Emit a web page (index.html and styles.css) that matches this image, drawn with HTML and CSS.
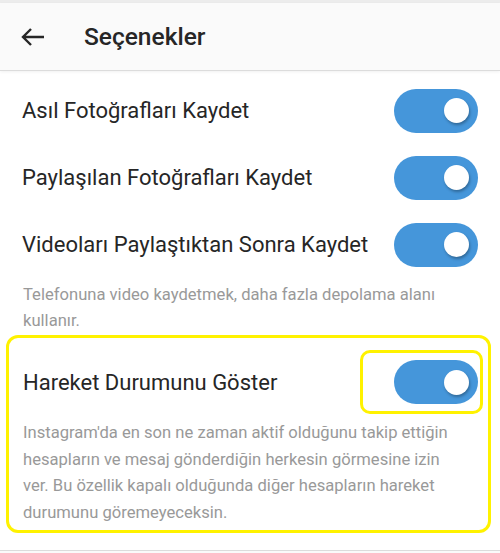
FILE: index.html
```html
<!DOCTYPE html>
<html>
<head>
  <meta charset="utf-8">
  <title>Seçenekler</title>
  <link rel="stylesheet" href="styles.css">
</head>
<body>
  <div class="status"></div>
  <div class="header">
    <svg class="back" width="24" height="20" viewBox="0 0 24 20">
      <path d="M23 10H2M10 2L2 10l8 8" fill="none" stroke="#262626" stroke-width="2.4" stroke-linejoin="miter"/>
    </svg>
    <h1>Seçenekler</h1>
  </div>

  <div class="list">
    <div class="row">
      <span class="label">Asıl Fotoğrafları Kaydet</span>
      <div class="switch"><div class="knob"></div></div>
    </div>
    <div class="row">
      <span class="label">Paylaşılan Fotoğrafları Kaydet</span>
      <div class="switch"><div class="knob"></div></div>
    </div>
    <div class="row">
      <span class="label">Videoları Paylaştıktan Sonra Kaydet</span>
      <div class="switch"><div class="knob"></div></div>
    </div>
    <p class="note">Telefonuna video kaydetmek, daha fazla depolama alanı kullanır.</p>

    <div class="marked">
      <div class="row marked-row">
        <span class="label">Hareket Durumunu Göster</span>
        <div class="marked-switch">
          <div class="switch"><div class="knob"></div></div>
        </div>
      </div>
      <p class="note">Instagram'da en son ne zaman aktif olduğunu takip ettiğin hesapların ve mesaj gönderdiğin herkesin görmesine izin ver. Bu özellik kapalı olduğunda diğer hesapların hareket durumunu göremeyeceksin.</p>
    </div>
  </div>

  <div class="footer"></div>
</body>
</html>
```

FILE: styles.css
```css
body {
  margin: 0;
  font-family: Roboto, "Noto Sans", sans-serif;
  color: #262626;
  background-color: #fff;
}

.status {
  height: 3px;
  background-color: #ececec;
}

.header {
  height: 67px;
  display: flex;
  align-items: center;
  padding-left: 21px;
  background-color: #fafafa;
  border-bottom: 1px solid #dcdcdc;
  box-shadow: 0 1px 3px rgba(0, 0, 0, 0.06);
}

.back {
  display: block;
  margin-right: 39px;
}

h1 {
  margin: 0;
  font-size: 24.5px;
  font-weight: 500;
  color: #262626;
}

.list {
  padding-top: 6px;
}

.row {
  height: 67px;
  display: flex;
  align-items: center;
  justify-content: space-between;
  padding: 0 22px;
}

.label {
  font-size: 22px;
  color: #262626;
}

.switch {
  width: 84px;
  height: 44px;
  border-radius: 22px;
  background-color: #4596da;
  display: flex;
  align-items: center;
  justify-content: flex-end;
  padding-right: 9px;
  box-sizing: border-box;
}

.knob {
  width: 25px;
  height: 25px;
  border-radius: 50%;
  background-color: #fff;
  box-shadow: 1px 2px 3px rgba(0, 0, 0, 0.3);
}

.note {
  margin: 4px 0 0;
  padding: 0 40px 0 23px;
  font-size: 16.6px;
  line-height: 26px;
  color: #999;
}

.marked {
  margin: 1px 0 0 6px;
  width: 485px;
  box-sizing: border-box;
  border: 3px solid #fff200;
  border-radius: 12px;
  padding: 12px 5px 4px 14px;
}

.marked .row {
  padding: 0;
  height: 64px;
}

.marked .note {
  margin-top: 6px;
  padding: 0 22px 0 0;
  line-height: 26.5px;
}

.marked-switch {
  border: 3px solid #fff200;
  border-radius: 10px;
  padding: 7px 2px 7px 31px;
}

.footer {
  margin-top: 17px;
  border-top: 1px solid #dcdcdc;
  height: 10px;
  background-color: #fafafa;
}
```
